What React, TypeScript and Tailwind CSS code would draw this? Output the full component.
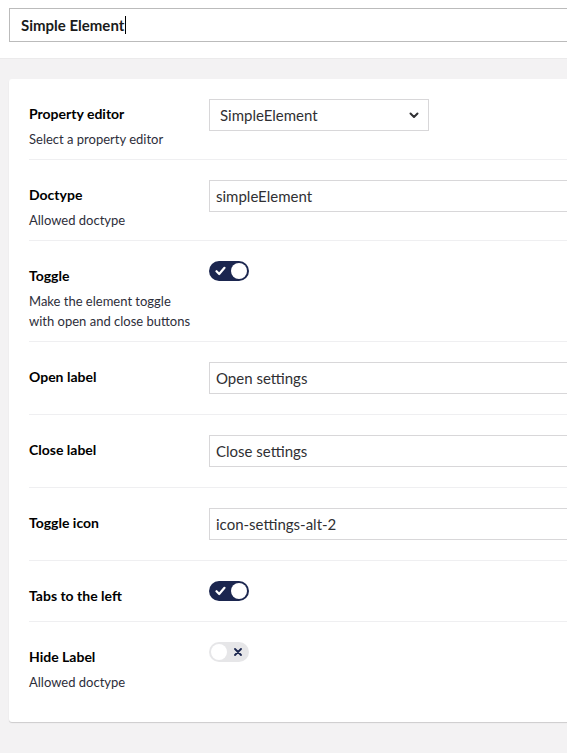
import React from "react";

const font = { fontFamily: "Lato, 'Open Sans', sans-serif" };

function Toggle({ on }: { on: boolean }) {
  if (on) {
    return (
      <div className="relative h-[20px] w-[40px] rounded-full bg-[#1b264f]">
        <svg
          className="absolute left-[6px] top-[5px]"
          width="11"
          height="10"
          viewBox="0 0 11 10"
          fill="none"
        >
          <path d="M1.5 5.2 L4.2 8 L9.5 1.8" stroke="#fff" strokeWidth="2.2" strokeLinecap="round" strokeLinejoin="round" />
        </svg>
        <span className="absolute right-[2px] top-[2px] h-[16px] w-[16px] rounded-full bg-white" />
      </div>
    );
  }
  return (
    <div className="relative h-[20px] w-[40px] rounded-full bg-[#e6e6e8]">
      <span className="absolute left-[2px] top-[2px] h-[16px] w-[16px] rounded-full bg-white" />
      <svg className="absolute left-[25px] top-[6px]" width="8" height="8" viewBox="0 0 8 8" fill="none">
        <path d="M1 1 L7 7 M7 1 L1 7" stroke="#1b264f" strokeWidth="1.8" strokeLinecap="round" />
      </svg>
    </div>
  );
}

function Row({
  label,
  desc,
  last,
  children,
}: {
  label: string;
  desc?: React.ReactNode;
  last?: boolean;
  children: React.ReactNode;
}) {
  return (
    <div className={`flex pt-5 pb-[10px] ${last ? "" : "border-b border-[#efeff1]"}`}>
      <div className="w-[180px] shrink-0 pt-[5px]">
        <div className="text-[14px] font-bold leading-5 text-black">{label}</div>
        {desc && <div className="mt-[5px] text-[13px] leading-5 text-[#2d2e3a]">{desc}</div>}
      </div>
      <div className="flex-1 pb-[10px]">{children}</div>
    </div>
  );
}

function TextInput({ value }: { value: string }) {
  return (
    <div className="flex h-[32px] w-full items-center border border-[#d8d7d9] bg-white px-[6px] text-[15px] text-[#303033]">
      {value}
    </div>
  );
}

export default function App() {
  return (
    <div className="h-[753px] w-full overflow-hidden bg-[#f3f2f3]" style={font}>
      <div className="w-[640px]">
        <div className="h-[59px] border-b border-[#ebeaeb] bg-white pl-[9px] pt-[8px]">
          <div className="flex h-[34px] w-full items-center border border-[#bbbbbb] pl-[11px] text-[15px] font-bold text-[#1b1b1b]">
            Simple Element
            <span className="ml-px h-[18px] w-px bg-black" />
          </div>
        </div>

        <div className="ml-[9px] mt-[20px] rounded-[3px] bg-white px-5 pb-5 shadow-[0_1px_1px_rgba(0,0,0,0.16)]">
          <Row label="Property editor" desc="Select a property editor">
            <div className="flex h-[32px] w-[220px] items-center justify-between border border-[#d8d7d9] bg-white pl-[10px] pr-[9px] text-[15px] text-[#303033]">
              SimpleElement
              <svg width="10" height="7" viewBox="0 0 10 7" fill="none">
                <path d="M1.5 1.5 L5 5 L8.5 1.5" stroke="#303033" strokeWidth="2" strokeLinecap="round" strokeLinejoin="round" />
              </svg>
            </div>
          </Row>
          <Row label="Doctype" desc="Allowed doctype">
            <TextInput value="simpleElement" />
          </Row>
          <Row
            label="Toggle"
            desc={
              <>
                Make the element toggle
                <br />
                with open and close buttons
              </>
            }
          >
            <Toggle on />
          </Row>
          <Row label="Open label">
            <TextInput value="Open settings" />
          </Row>
          <Row label="Close label">
            <TextInput value="Close settings" />
          </Row>
          <Row label="Toggle icon">
            <TextInput value="icon-settings-alt-2" />
          </Row>
          <Row label="Tabs to the left">
            <Toggle on />
          </Row>
          <Row label="Hide Label" desc="Allowed doctype" last>
            <Toggle on={false} />
          </Row>
        </div>
      </div>
    </div>
  );
}
